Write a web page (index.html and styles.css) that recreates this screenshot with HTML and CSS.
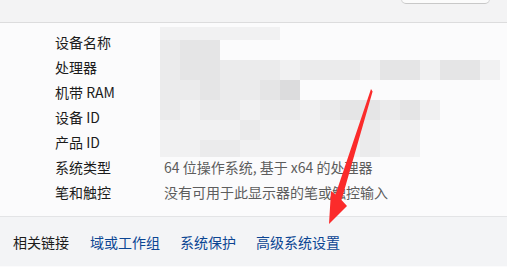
FILE: index.html
```html
<!DOCTYPE html>
<html lang="zh-CN">
<head>
  <meta charset="UTF-8">
  <meta name="viewport" content="width=device-width, initial-scale=1.0">
  <title>设备规格</title>
  <link rel="stylesheet" href="styles.css">
</head>
<body>
  <div class="top-bar">
    <button class="copy-btn"></button>
  </div>

  <div class="specs">
    <div class="row"><span class="label">设备名称</span><span class="value"></span></div>
    <div class="row"><span class="label">处理器</span><span class="value"></span></div>
    <div class="row"><span class="label">机带 RAM</span><span class="value"></span></div>
    <div class="row"><span class="label">设备 ID</span><span class="value"></span></div>
    <div class="row"><span class="label">产品 ID</span><span class="value"></span></div>
    <div class="row"><span class="label">系统类型</span><span class="value">64 位操作系统, 基于 x64 的处理器</span></div>
    <div class="row"><span class="label">笔和触控</span><span class="value">没有可用于此显示器的笔或触控输入</span></div>
  </div>

  <div class="links">
    <span class="links-title">相关链接</span>
    <a href="#">域或工作组</a>
    <a href="#">系统保护</a>
    <a href="#">高级系统设置</a>
  </div>

  <!-- redaction mosaic over the private values -->
  <div class="mosaic">
    <i class="m1"></i><i class="m1"></i><i class="m1"></i><i class="m1"></i><i class="m1"></i><i class="m1"></i><i></i><i></i><i></i><i></i><i></i><i></i><i></i><i></i><i></i><i></i><i></i>
    <i class="m2"></i><i class="m3"></i><i class="m3"></i><i></i><i></i><i></i><i></i><i></i><i></i><i></i><i></i><i></i><i></i><i></i><i></i><i></i><i></i>
    <i class="m2"></i><i class="m3"></i><i class="m3"></i><i class="m2"></i><i class="m2"></i><i class="m2"></i><i class="m1"></i><i class="m2"></i><i class="m2"></i><i class="m2"></i><i class="m1"></i><i class="m3"></i><i class="m3"></i><i class="m1"></i><i class="m3"></i><i class="m3"></i><i class="m1"></i>
    <i class="m2"></i><i class="m2"></i><i class="m3"></i><i class="m2"></i><i class="m2"></i><i class="m3"></i><i class="m4"></i><i></i><i></i><i></i><i></i><i></i><i></i><i></i><i></i><i></i><i></i>
    <i class="m2"></i><i class="m1"></i><i class="m2"></i><i class="m2"></i><i class="m1"></i><i class="m2"></i><i class="m2"></i><i class="m1"></i><i class="m2"></i><i class="m3"></i><i class="m3"></i><i class="m2"></i><i class="m3"></i><i class="m1"></i><i></i><i></i><i></i>
    <i class="m1"></i><i class="m1"></i><i class="m1"></i><i class="m1"></i><i class="m2"></i><i class="m1"></i><i class="m1"></i><i class="m1"></i><i class="m1"></i><i class="m1"></i><i class="m2"></i><i class="m1"></i><i class="m1"></i><i></i><i></i><i></i><i></i>
    <i class="m1"></i><i class="m1"></i><i class="m2"></i><i class="m2"></i><i class="m1"></i><i class="m1"></i><i class="m1"></i><i class="m1"></i><i class="m1"></i><i class="m1"></i><i class="m2"></i><i class="m1"></i><i class="m1"></i><i></i><i></i><i></i><i></i>
  </div>

  <svg class="arrow" width="507" height="267" viewBox="0 0 507 267">
    <polygon points="371,89 372.6,91.5 341.5,200 347,206 329,224 331,191 335.5,194.5" fill="#fb2b2b"/>
  </svg>
</body>
</html>
```

FILE: styles.css
```css
body {
  font-family: "Noto Sans CJK SC", "Noto Sans", sans-serif;
  font-size: 14px;
  background: #fbfbfc;
  color: #1b1b1b;
  margin: 0;
  width: 507px;
  height: 267px;
  overflow: hidden;
  position: relative;
}
.top-bar {
  height: 22px;
  background: #f3f3f4;
  border-bottom: 1px solid #dcdcdd;
  display: flex;
  justify-content: flex-end;
  padding-right: 17px;
}
.copy-btn {
  width: 89px;
  height: 30px;
  margin-top: -26px;
  background: #fbfbfb;
  border: 1px solid #d6d6d6;
  border-bottom-color: #c8c8c8;
  border-radius: 5px;
}
.specs {
  padding: 7px 0 11px 55px;
}
.row {
  display: flex;
  height: 25px;
  line-height: 25px;
}
.label {
  width: 109px;
  flex: none;
}
.value {
  color: #5d5d5d;
}
.links {
  border-top: 1px solid #e3e4e6;
  background: #f3f4f6;
  height: 50px;
  box-sizing: border-box;
  padding: 15px 0 0 13px;
  line-height: 20px;
  display: flex;
  gap: 20px;
}
.links-title {
  color: #1b1b1b;
  margin-right: 1px;
}
.links a {
  color: #0b4593;
  text-decoration: none;
}
.mosaic {
  position: absolute;
  left: 160px;
  top: 27px;
  display: grid;
  grid-template-columns: repeat(17, 20px);
  grid-template-rows: 13px repeat(5, 20px) 17px;
}
.mosaic i {
  display: block;
}
.mosaic .m1 { background: #f1f1f2; }
.mosaic .m2 { background: #ebebec; }
.mosaic .m3 { background: #e5e5e6; }
.mosaic .m4 { background: #dcdcdd; }
.arrow {
  position: absolute;
  left: 0;
  top: 0;
}
```
